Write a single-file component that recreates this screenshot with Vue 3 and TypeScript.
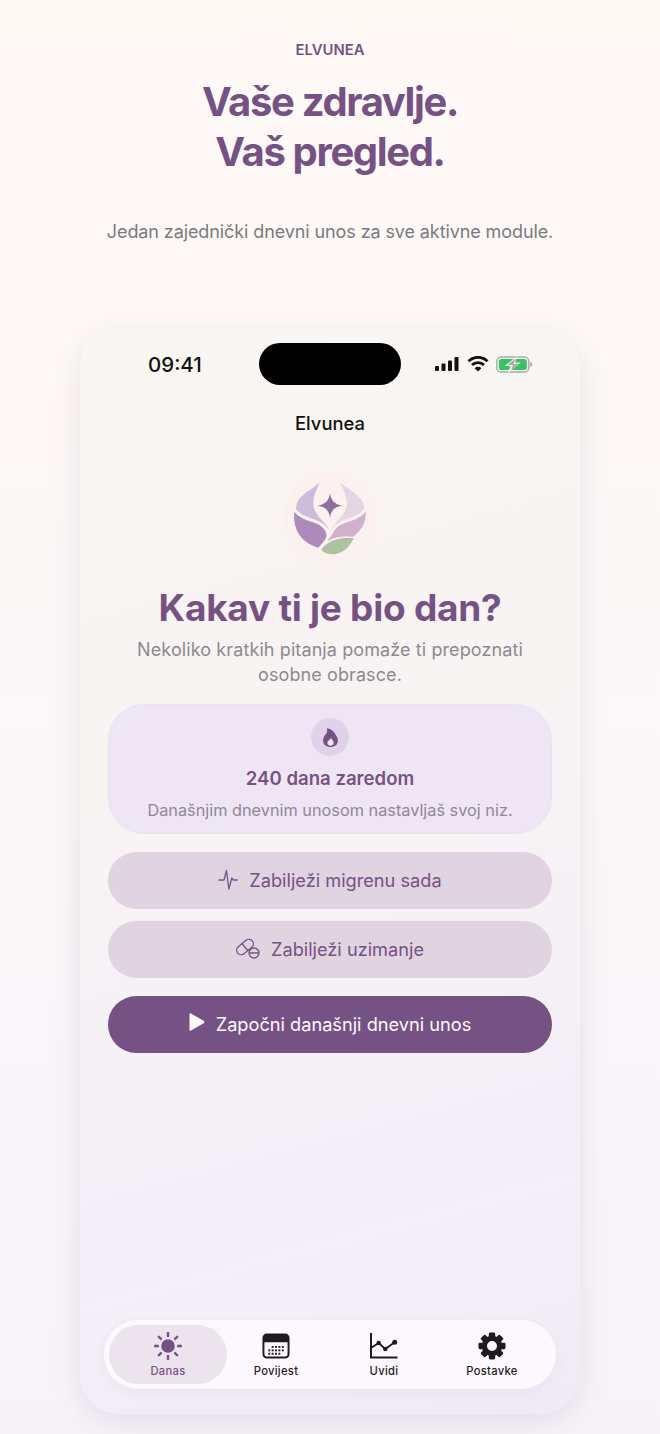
<script setup lang="ts">
const tabs = [
  { label: 'Danas', icon: 'sun' },
  { label: 'Povijest', icon: 'calendar' },
  { label: 'Uvidi', icon: 'chart' },
  { label: 'Postavke', icon: 'gear' },
]
const rays = [0, 45, 90, 135, 180, 225, 270, 315]
const gearTeeth = [0, 45, 90, 135, 180, 225, 270, 315]
const calendarDots = [
  [11, 15], [14.5, 15], [18, 15], [21.5, 15],
  [7.5, 18.5], [11, 18.5], [14.5, 18.5], [18, 18.5], [21.5, 18.5],
  [7.5, 22], [11, 22], [14.5, 22], [18, 22],
]
</script>

<template>
  <main class="page">
    <header class="hero">
      <p class="brand">ELVUNEA</p>
      <h1>Vaše zdravlje.<br />Vaš pregled.</h1>
      <p class="lead">Jedan zajednički dnevni unos za sve aktivne module.</p>
    </header>

    <section class="phone">
      <div class="status">
        <span class="time">09:41</span>
        <span class="island"></span>
        <span class="status-icons">
          <svg width="26" height="16" viewBox="0 0 26 16">
            <rect x="1" y="10" width="4" height="5" rx="1" fill="#111" />
            <rect x="7.5" y="7.5" width="4" height="7.5" rx="1" fill="#111" />
            <rect x="14" y="4.5" width="4" height="10.5" rx="1" fill="#111" />
            <rect x="20.5" y="1" width="4" height="14" rx="1" fill="#111" />
          </svg>
          <svg width="22" height="16" viewBox="0 0 22 16" fill="none" stroke="#111" stroke-width="2.8">
            <path d="M1.5 5.2a13.5 13.5 0 0 1 19 0" />
            <path d="M5 9a8.6 8.6 0 0 1 12 0" />
            <path d="M11 15.6 7.7 12.2a4.6 4.6 0 0 1 6.6 0z" fill="#111" stroke="none" />
          </svg>
          <svg width="37" height="17" viewBox="0 0 37 17">
            <rect x="0.8" y="1" width="32" height="15" rx="4.6" fill="none" stroke="#a9a9a5" stroke-width="1.4" />
            <rect x="2.8" y="3" width="28" height="11" rx="2.8" fill="#35c463" />
            <path d="M34.2 6c1.4.4 2 1.2 2 2.5s-.6 2.1-2 2.5z" fill="#a9a9a5" />
            <path d="M21.5 0 8.5 10h6L12 17l13-10.500h-6z" fill="#f7f4f1" />
            <path d="M19.5 2.500 11.500 9h5.500l-2 5.500 8-6.500h-5.500z" fill="#a9a9a5" />
          </svg>
        </span>
      </div>

      <div class="nav-title">Elvunea</div>

      <div class="logo">
        <svg width="80" height="80" viewBox="60 60 240 240">
          <path d="M150 70C120 95 90 110 82 130c-3 8-4 14-4 20 12 16 32 24 52 30 18 6 38 18 46 32-1-8-12-18-20-28-14-15-28-32-26-55 1-17 8-36 20-59z" fill="#cdbcda" />
          <path d="M210 70c30 25 60 40 68 60 3 8 4 14 4 20-12 16-32 24-52 30-18 6-38 18-46 32 1-8 12-18 20-28 14-15 28-32 26-55-1-17-8-36-20-59z" fill="#e5d6e6" />
          <path d="M72 156c14 18 36 26 56 32 20 6 36 18 42 34 3 10-2 18-8 26-6 7-12 14-17 20-30-10-52-26-64-50-9-18-12-38-9-62z" fill="#ae8abb" stroke="#fbf3f0" stroke-width="3" />
          <path d="M288 156c-14 18-36 26-56 32-18 6-34 14-42 30-7 12-16 22-20 32 20-14 48-19 78-15 16-11 30-26 36-44 4-12 6-24 4-35z" fill="#d0b1cc" stroke="#fbf3f0" stroke-width="3" />
          <path d="M251 238c-30-4-60 2-80 16-8 6-14 12-18 18 12 12 30 16 48 12 22-4 38-22 50-46z" fill="#aec2a2" />
          <path d="M180 103c3 20 12 33 36 37-24 4-33 15-36 36-3-21-12-32-36-36 24-4 33-17 36-37z" fill="#8e6fa2" />
        </svg>
      </div>

      <h2>Kakav ti je bio dan?</h2>
      <p class="intro">Nekoliko kratkih pitanja pomaže ti prepoznati osobne obrasce.</p>

      <div class="streak">
        <span class="flame">
          <svg width="15" height="19" viewBox="0 0 14 18">
            <path d="M3.5.3C6.5.6 9.5 2.300 11 5c2 3 3 5 3 7 0 3.500-3 6-7 6s-7-2.500-7-6c0-2.500 1-4.500 2.500-6 .7-1 2-3 1-5.700z" fill="#765284" />
            <path d="M7.5 9.500c1 1.500 2.500 2.800 2.500 4.500 0 1.600-1.300 2.700-3 2.700S4 15.600 4 14c0-1.500 2-2.500 3.500-4.500z" fill="#efe6f6" />
          </svg>
        </span>
        <strong>240 dana zaredom</strong>
        <span class="streak-note">Današnjim dnevnim unosom nastavljaš svoj niz.</span>
      </div>

      <button class="btn soft first" type="button">
        <svg width="20" height="20" viewBox="0 0 20 20" fill="none" stroke="#765284" stroke-width="1.3" stroke-linecap="round" stroke-linejoin="round">
          <path d="M1 10h5l2.500-9.500 2.300 18.500 3-11 1.500 2h4" />
        </svg>
        Zabilježi migrenu sada
      </button>
      <button class="btn soft second" type="button">
        <svg width="24" height="22" viewBox="0 0 24 22" fill="none" stroke="#765284" stroke-width="1.3" stroke-linecap="round">
          <rect x="-9.5" y="-4.5" width="19" height="9" rx="4.5" transform="translate(9 9) rotate(-40)" />
          <path d="m6 5.500 5.800 7" />
          <circle cx="18" cy="15" r="5" fill="#e0d4e0" />
          <path d="M13.500 15h9" />
        </svg>
        Zabilježi uzimanje
      </button>
      <button class="btn primary" type="button">
        <svg class="play" width="16" height="18" viewBox="0 0 16 18">
          <path d="M.5 1.300C.5.500 1.300 0 2 .4l13 7.700c.7.400.7 1.400 0 1.800L2 17.600c-.7.400-1.500-.1-1.500-.9z" fill="#fdf9fd" />
        </svg>
        Započni današnji dnevni unos
      </button>

      <nav class="tabbar">
        <div v-for="(tab, i) in tabs" :key="tab.label" class="tab" :class="{ active: i === 0 }">
          <svg v-if="tab.icon === 'sun'" width="30" height="30" viewBox="0 0 30 30">
            <circle cx="15" cy="15" r="6.8" fill="#765284" />
            <rect v-for="r in rays" :key="r" x="13.8" y="1" width="2.4" height="5" rx="0.6" fill="#765284" :transform="`rotate(${r} 15 15)`" />
          </svg>
          <svg v-else-if="tab.icon === 'calendar'" width="28" height="28" viewBox="0 0 29 28">
            <rect x="1.5" y="2" width="26" height="24" rx="3.5" fill="#fdf8fd" stroke="#1f1a22" stroke-width="2" />
            <path d="M1.500 5.500a3.500 3.500 0 0 1 3.500-3.500h19a3.500 3.500 0 0 1 3.500 3.500V10h-26z" fill="#1f1a22" />
            <rect v-for="d in calendarDots" :key="d.join()" :x="d[0] - 1" :y="d[1] - 1" width="2" height="2" fill="#1f1a22" />
          </svg>
          <svg v-else-if="tab.icon === 'chart'" width="28" height="26" viewBox="0 0 28 26" fill="none" stroke="#1f1a22">
            <path d="M1 0v24.500h26.500" stroke-width="2" />
            <path d="M1 15 8.700 10 15.300 16 24.700 9.300" stroke-width="1.8" />
            <circle cx="8.7" cy="10" r="2.2" fill="#1f1a22" stroke="none" />
            <circle cx="15.3" cy="16" r="2.2" fill="#1f1a22" stroke="none" />
            <circle cx="24.7" cy="9.3" r="2.5" fill="#1f1a22" stroke="none" />
          </svg>
          <svg v-else width="28" height="28" viewBox="0 0 28 28">
            <rect v-for="r in gearTeeth" :key="r" x="10.8" y="0.5" width="6.4" height="6" rx="1.4" fill="#1f1a22" :transform="`rotate(${r} 14 14)`" />
            <circle cx="14" cy="14" r="7.6" fill="none" stroke="#1f1a22" stroke-width="5.2" />
          </svg>
          <span>{{ tab.label }}</span>
        </div>
      </nav>
    </section>
  </main>
</template>

<style>
body {
  background: #fdf8f8;
}
</style>

<style scoped>
.page {
  width: 660px;
  height: 1434px;
  box-sizing: border-box;
  padding-top: 41px;
  overflow: hidden;
  background: linear-gradient(180deg, #fff9f6 0%, #fcf7f8 50%, #f8f3f9 100%);
  font-family: Inter, 'Liberation Sans', sans-serif;
  color: #765284;
}

.hero {
  text-align: center;
  height: 287px;
}

.brand {
  margin: 0;
  font-size: 14.8px;
  line-height: 19px;
  font-weight: 600;
}

h1 {
  margin: 17px 0 0;
  font-size: 40px;
  line-height: 50px;
  font-weight: 700;
  letter-spacing: -1.35px;
}

.lead {
  margin: 42px 0 0;
  font-size: 18px;
  line-height: 26px;
  color: #7d7980;
  letter-spacing: -0.1px;
}

.phone {
  position: relative;
  width: 500px;
  height: 1086px;
  box-sizing: border-box;
  margin: 0 auto;
  padding: 0 28px;
  display: flex;
  flex-direction: column;
  align-items: center;
  border-radius: 40px;
  background: linear-gradient(165deg, #faf6f3 0%, #f8f3f3 40%, #f3eef8 85%, #efebf5 100%);
  box-shadow: 0 10px 30px rgba(90, 70, 110, 0.12);
}

.status {
  width: 500px;
  height: 42px;
  margin-top: 15px;
  flex: none;
  display: grid;
  grid-template-columns: 179px 142px 179px;
  align-items: center;
}

.time {
  padding-left: 68px;
  font-size: 20.5px;
  font-weight: 500;
  color: #111;
}

.island {
  height: 42px;
  border-radius: 21px;
  background: #000;
}

.status-icons {
  display: flex;
  align-items: center;
  gap: 7px;
  padding-left: 33px;
}

.nav-title {
  margin-top: 27px;
  font-size: 18.4px;
  line-height: 22px;
  font-weight: 500;
  color: #111;
}

.logo {
  margin-top: 37px;
  width: 92px;
  height: 92px;
  flex: none;
  display: flex;
  align-items: center;
  justify-content: center;
  border-radius: 50%;
  background: #fbf1ee;
}

.logo svg {
  margin-top: 3px;
}

h2 {
  margin: 23px 0 0;
  font-size: 37px;
  line-height: 44px;
  font-weight: 700;
  letter-spacing: -0.25px;
}

.intro {
  margin: 7px 0 0;
  font-size: 18px;
  line-height: 25px;
  letter-spacing: 0.1px;
  text-align: center;
  color: #8d898f;
  width: 410px;
}

.streak {
  margin-top: 17px;
  width: 100%;
  height: 130px;
  box-sizing: border-box;
  flex: none;
  padding-top: 13px;
  display: flex;
  flex-direction: column;
  align-items: center;
  border-radius: 36px;
  background: #efe6f5;
  border: 1px solid #ebe2f0;
}

.flame {
  width: 38px;
  height: 38px;
  display: flex;
  align-items: center;
  justify-content: center;
  border-radius: 50%;
  background: #e0d3e9;
}

.streak strong {
  margin-top: 10px;
  font-size: 18.6px;
  line-height: 24px;
  font-weight: 600;
}

.streak-note {
  margin-top: 10px;
  font-size: 16.3px;
  line-height: 20px;
  color: #8f8894;
}

.btn {
  width: 100%;
  height: 57px;
  flex: none;
  display: flex;
  align-items: center;
  justify-content: center;
  gap: 11px;
  border: none;
  border-radius: 29px;
  font-family: inherit;
  font-size: 18.2px;
  padding: 0 0 1px;
}

.soft {
  background: #e0d4e0;
  color: #765284;
}

.first {
  margin-top: 18px;
}

.second {
  margin-top: 12px;
}

.primary {
  margin-top: 18px;
  background: #765284;
  color: #fdf9fd;
}

.play {
  margin-top: -4px;
}

.tabbar {
  margin-top: auto;
  margin-bottom: 25px;
  width: 452px;
  height: 69px;
  box-sizing: border-box;
  flex: none;
  padding: 5px;
  display: grid;
  grid-template-columns: 118px 98px 118px 98px;
  border-radius: 35px;
  background: #fdf8fe;
  box-shadow: 0 4px 14px rgba(90, 70, 110, 0.05);
}

.tab {
  display: flex;
  flex-direction: column;
  align-items: center;
  padding-top: 6px;
  font-size: 11.2px;
  line-height: 14px;
  font-weight: 500;
  color: #1f1a22;
  letter-spacing: 0.3px;
}

.tab svg {
  height: 30px;
  flex: none;
}

.tab span {
  margin-top: 3px;
}

.tab.active {
  border-radius: 30px;
  background: #ebe4ec;
  color: #765284;
}
</style>
